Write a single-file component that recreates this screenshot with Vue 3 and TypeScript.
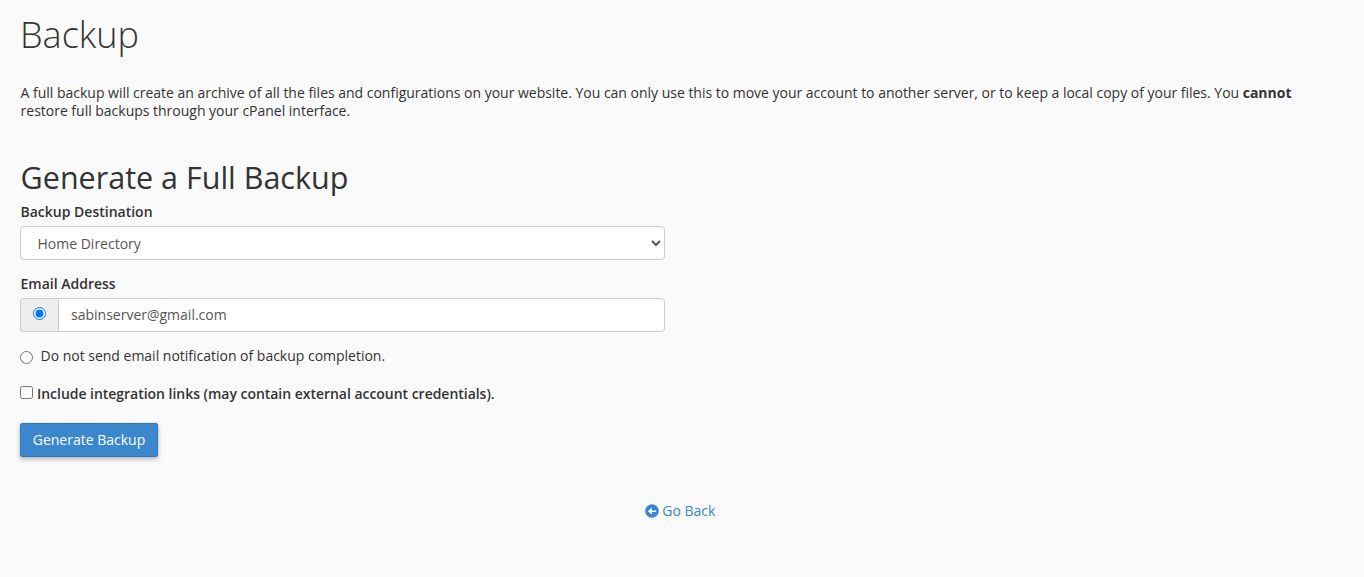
<script setup lang="ts">
</script>

<template>
  <div class="page">
    <h1 class="title">Backup</h1>
    <p class="intro">A full backup will create an archive of all the files and configurations on your website. You can only use this to move your account to another server, or to keep a local copy of your files. You <strong>cannot</strong> restore full backups through your cPanel interface.</p>
    <h2 class="sub">Generate a Full Backup</h2>
    <form class="form" @submit.prevent>
      <label class="lab" for="dest">Backup Destination</label>
      <select id="dest" class="select">
        <option>Home Directory</option>
      </select>
      <label class="lab email-lab" for="email">Email Address</label>
      <div class="group">
        <span class="addon"><input type="radio" name="n" checked /></span>
        <input id="email" class="input" type="text" value="sabinserver@gmail.com" />
      </div>
      <label class="radio-row"><input type="radio" name="n" /><span>Do not send email notification of backup completion.</span></label>
      <label class="check-row"><input type="checkbox" /><span>Include integration links (may contain external account credentials).</span></label>
      <button class="btn" type="button">Generate Backup</button>
    </form>
    <div class="back">
      <a class="link" href="#">
        <svg class="arrow" viewBox="0 0 512 512" width="14" height="14"><path fill="currentColor" d="M256 8a248 248 0 1 0 0 496 248 248 0 0 0 0-496zm144 280H256v82c0 11-13 16-20 9L112 273c-5-5-5-12 0-17l124-106c7-7 20-2 20 9v81h144c7 0 12 5 12 12v24c0 7-5 12-12 12z"/></svg>
        Go Back
      </a>
    </div>
  </div>
</template>

<style>
html, body { margin: 0; background: #fafafa; }
</style>

<style scoped>
.page {
  box-sizing: border-box;
  height: 577px;
  padding: 0 20px;
  background: #fafafa;
  color: #333;
  font-family: "Open Sans", sans-serif;
  font-size: 14px;
  line-height: 20px;
  overflow: hidden;
}
.title {
  margin: 0;
  padding-top: 13px;
  font-size: 36px;
  line-height: 44px;
  font-weight: 300;
  color: #333;
}
.intro { max-width: 1300px; margin: 26.5px 0 0; padding-left: 0.6px; line-height: 18.5px; letter-spacing: -0.014px; }
.sub {
  margin: 36.5px 0 0;
  padding-left: 0.6px;
  font-size: 30.5px;
  line-height: 40px;
  font-weight: 400;
  color: #333;
}
.form { width: 645px; display: flex; flex-direction: column; align-items: flex-start; }
.lab { font-weight: 600; margin-top: 5px; padding-left: 0.5px; }
.select {
  box-sizing: border-box;
  width: 100%;
  height: 34px;
  margin-top: 4px;
  padding: 0 12.5px;
  border: 1px solid #ccc;
  border-radius: 4px;
  background: #fff;
  color: #555;
  font: 14px "Open Sans", sans-serif;
}
.email-lab { margin-top: 14px; }
.group { display: flex; width: 100%; height: 34px; margin-top: 4px; }
.addon {
  box-sizing: border-box;
  width: 38px;
  display: flex;
  align-items: center;
  justify-content: center;
  background: #eee;
  border: 1px solid #ccc;
  border-right: 0;
  border-radius: 4px 0 0 4px;
  padding-bottom: 3px;
}
.addon input { margin: 0; }
.input {
  box-sizing: border-box;
  flex: 1;
  min-width: 0;
  padding: 0 12px 1px;
  border: 1px solid #ccc;
  border-radius: 0 4px 4px 0;
  background: #fff;
  color: #555;
  font: 14px "Open Sans", sans-serif;
}
.radio-row { display: flex; align-items: center; gap: 7.5px; margin-top: 14px; letter-spacing: -0.01px; }
.radio-row input { margin: 2px 0 0; }
.check-row { display: flex; align-items: center; gap: 4px; margin-top: 18px; font-weight: 600; letter-spacing: -0.03px; }
.check-row input { margin: 0 0 3px; }
.btn {
  box-sizing: border-box;
  width: 138px;
  height: 34px;
  margin-top: 19px;
  padding: 0 0 1px;
  border: 1px solid #3079bd;
  border-radius: 2px;
  background: #3a87cd;
  color: #fff;
  font: 14px "Open Sans", sans-serif;
  box-shadow: 0 2px 5px rgba(0,0,0,.3);
}
.back { margin-top: 44px; text-align: center; padding-right: 4px; }
.link { color: #3a87cd; text-decoration: none; }
.arrow { vertical-align: -2px; }
</style>
